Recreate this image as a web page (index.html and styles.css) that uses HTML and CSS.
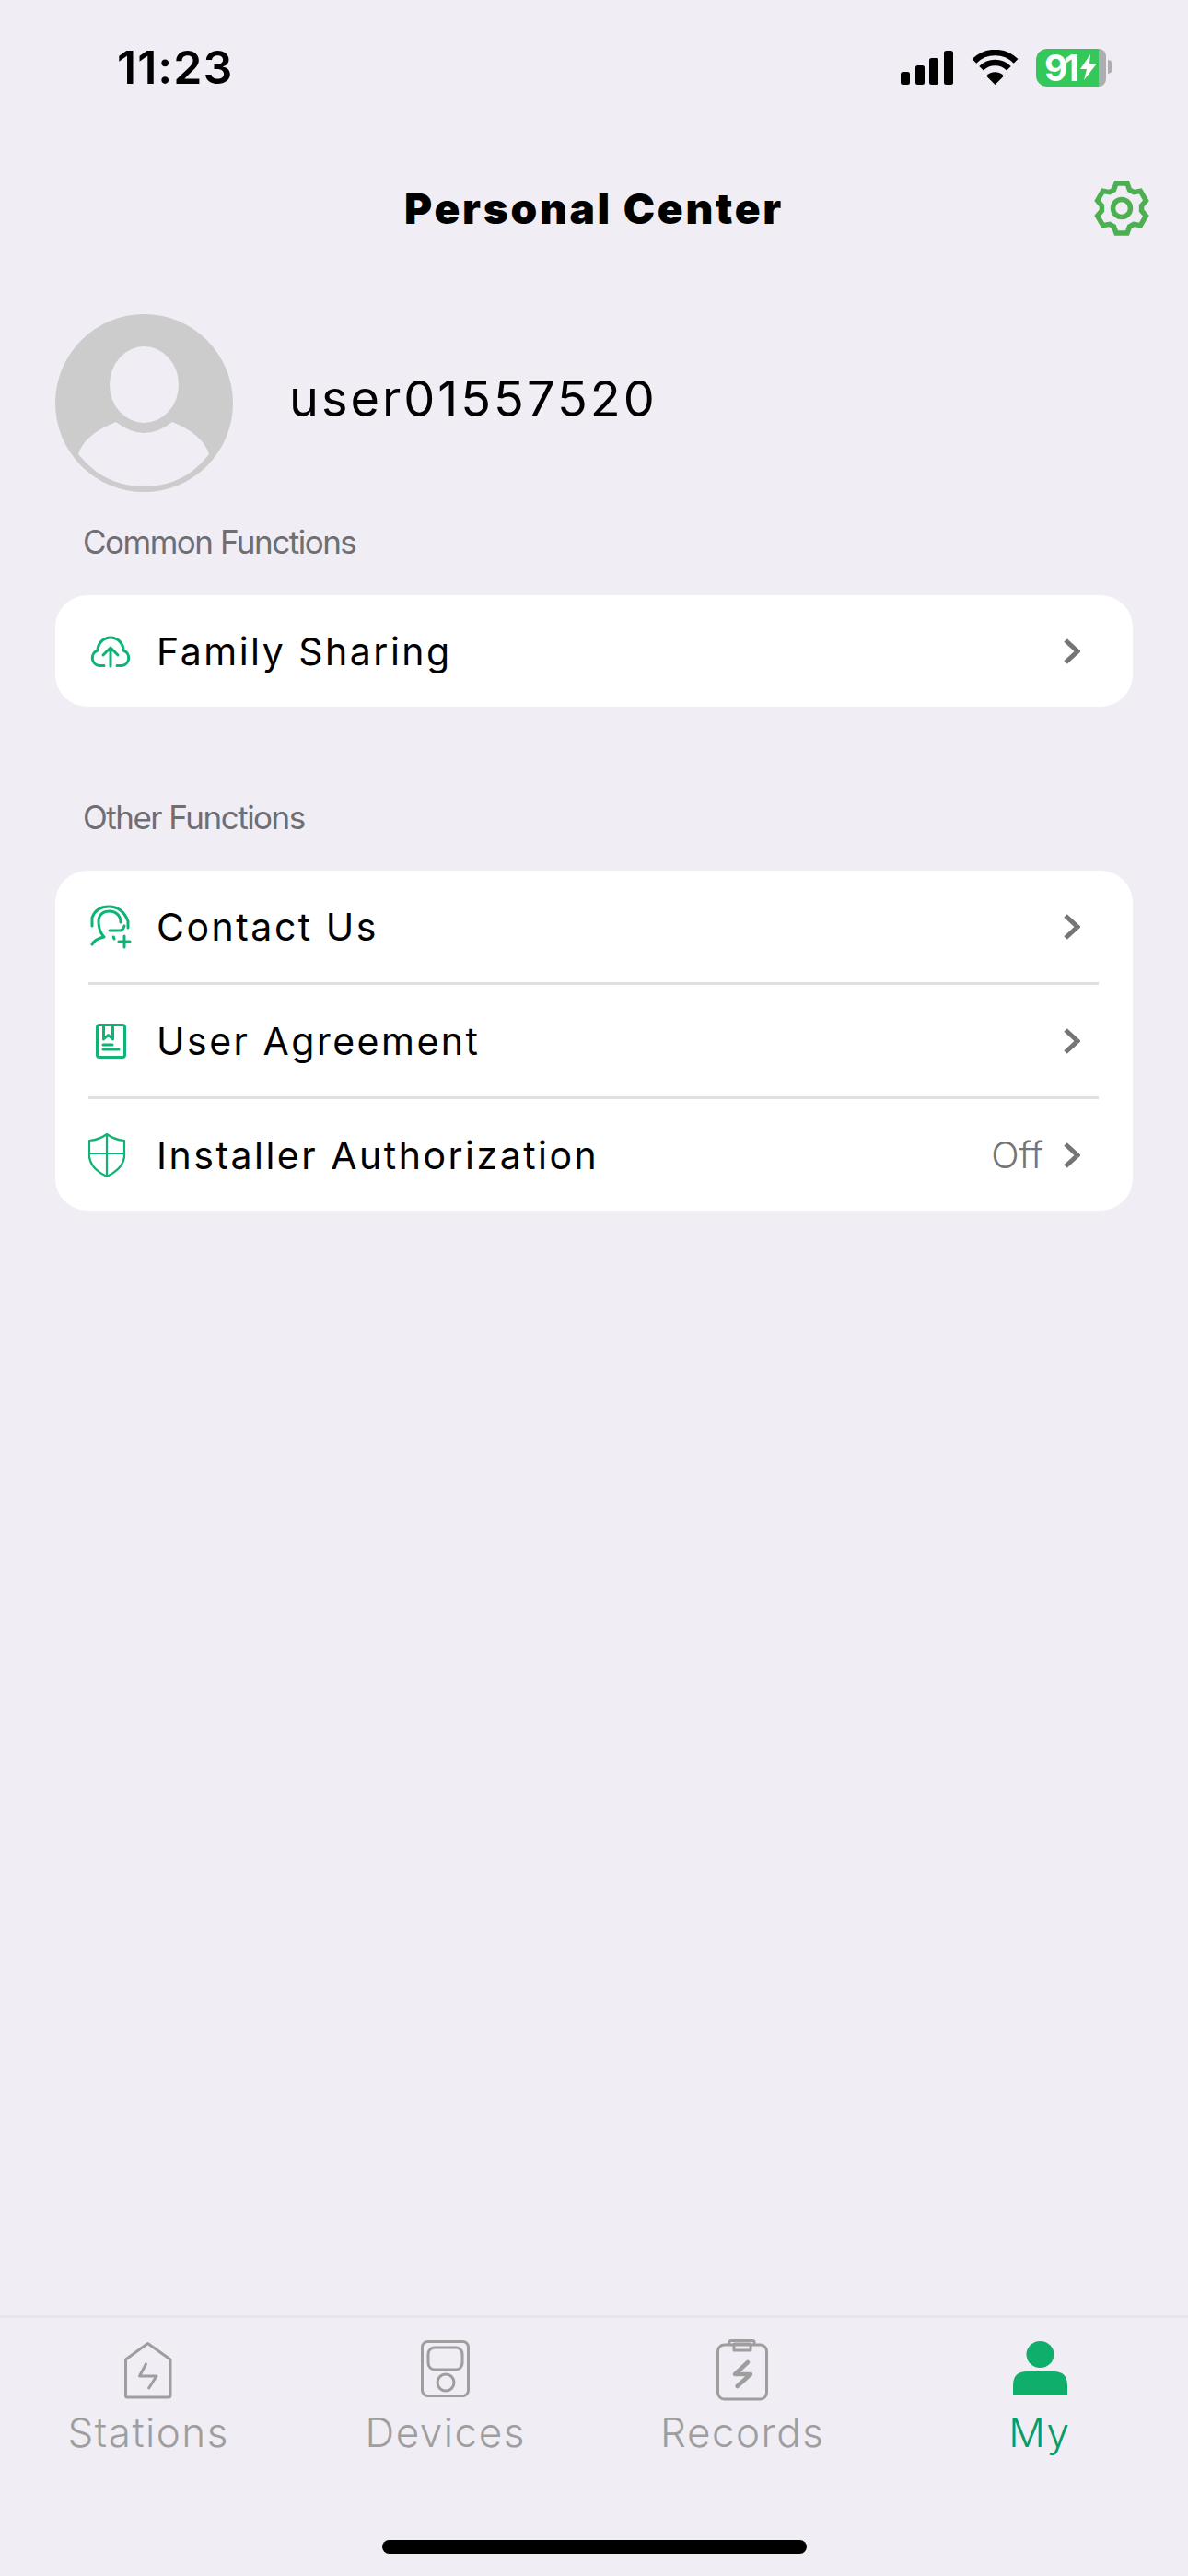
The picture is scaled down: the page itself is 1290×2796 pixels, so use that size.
FILE: index.html
```html
<!DOCTYPE html>
<html lang="en">
<head>
    <meta charset="UTF-8">
    <meta name="viewport" content="width=device-width, initial-scale=1.0">
    <title>Personal Center</title>

    <link rel="stylesheet" href="styles.css">
</head>
<body>
    <div class="screen">
        <div class="status">
            <span class="status__time">11:23</span>
            <div class="status__icons">
                <svg class="icon-signal" width="57" height="37" viewBox="0 0 57 37">
                    <rect x="0" y="23" width="10" height="14" rx="2.5"/>
                    <rect x="16" y="16" width="10" height="21" rx="2.5"/>
                    <rect x="31" y="8" width="10" height="29" rx="2.5"/>
                    <rect x="47" y="0" width="10" height="37" rx="2.5"/>
                </svg>
                <svg class="icon-wifi" width="51" height="38" viewBox="0 0 51 38">
                    <path class="wifi-arc" d="M2.9 12.4A32 32 0 0 1 48.1 12.4"/>
                    <path class="wifi-arc" d="M10.6 20.2A21 21 0 0 1 40.4 20.2"/>
                    <path d="M25.5 38L16 28.5A13 13 0 0 1 35 28.5Z"/>
                </svg>
                <div class="battery">
                    <div class="battery__fill">
                        <span class="battery__level">91</span>
                        <svg width="18" height="28" viewBox="0 0 18 28">
                            <path d="M11 0L0 16H7L4 28L18 10H10Z" fill="#fff"/>
                        </svg>
                    </div>
                    <div class="battery__rest"></div>
                </div>
            </div>
        </div>

        <header class="nav">
            <h1 class="nav__title">Personal Center</h1>
            <svg class="nav__gear" width="60" height="60" viewBox="0 0 60 60">
                <path d="M21.5 10L24 3H36L38.5 10L43.07 12.64L50.38 11.3L56.38 21.7L51.57 27.36V32.64L56.38 38.3L50.38 48.7L43.07 47.36L38.5 50L36 57H24L21.5 50L16.93 47.36L9.62 48.7L3.62 38.3L8.43 32.64V27.36L3.62 21.7L9.62 11.3L16.93 12.64Z"/>
                <circle cx="30" cy="30" r="9.5"/>
            </svg>
        </header>

        <main class="content">
            <div class="profile">
                <svg class="profile__avatar" width="193" height="193" viewBox="0 0 193 193">
                    <circle cx="96.5" cy="96.5" r="96.5" fill="#cccccc"/>
                    <ellipse cx="96.5" cy="76.5" rx="37.5" ry="41.5" fill="#f0edf4"/>
                    <path d="M66 117Q96.5 141 127 117Q160 130 167 152Q140 187 96.5 187Q53 187 25 152Q32 130 66 117Z" fill="#f0edf4"/>
                </svg>
                <span class="profile__name">user01557520</span>
            </div>

            <h2 class="section-label">Common Functions</h2>
            <ul class="card">
                <li class="row">
                    <svg class="row__icon" width="48" height="48" viewBox="0 0 48 48">
                        <path transform="translate(2 7)" d="M15 32.5H10A8.5 8.5 0 0 1 8 16A14 14 0 0 1 36 16A8.5 8.5 0 0 1 34 32.5H29M22 33V14M14 21L22 13L30 21"/>
                    </svg>
                    <span class="row__label">Family Sharing</span>
                    <svg class="row__chevron" width="18" height="28" viewBox="0 0 18 28"><path d="M2 2L15 14L2 26"/></svg>
                </li>
            </ul>

            <h2 class="section-label section-label--other">Other Functions</h2>
            <ul class="card">
                <li class="row">
                    <svg class="row__icon" width="48" height="48" viewBox="0 0 48 48">
                        <path transform="translate(2 1)" d="M2 22V13C5 5 12 1 20 1C30 1 37 6 41 17V24M15 34C11 30 9 24 9 17C9 10 14 6 21 6C28 6 33 11 33 18M21 27H33Q36 26 37 22M15 34Q5 36 2 42M25.300 34L26 36M37 33V45M31 39H43"/>
                    </svg>
                    <span class="row__label">Contact Us</span>
                    <svg class="row__chevron" width="18" height="28" viewBox="0 0 18 28"><path d="M2 2L15 14L2 26"/></svg>
                </li>
                <li class="row">
                    <svg class="row__icon" width="48" height="48" viewBox="0 0 48 48">
                        <path transform="translate(8 5)" d="M4 1.5H29Q31.5 1.5 31.5 4V34Q31.5 36.5 29 36.5H4Q1.5 36.5 1.5 34V4Q1.5 1.5 4 1.5ZM8.5 2V17L13.5 12.5L18.5 17V2M8 23H18M8 28H25"/>
                    </svg>
                    <span class="row__label">User Agreement</span>
                    <svg class="row__chevron" width="18" height="28" viewBox="0 0 18 28"><path d="M2 2L15 14L2 26"/></svg>
                </li>
                <li class="row">
                    <svg class="row__icon row__icon--thin" width="48" height="48" viewBox="0 0 48 48">
                        <path d="M20 1Q28 7 39 8V26Q37 39 20 47Q3 39 1 26V8Q12 7 20 1ZM20 1V47M1 22H39"/>
                    </svg>
                    <span class="row__label">Installer Authorization</span>
                    <span class="row__value">Off</span>
                    <svg class="row__chevron" width="18" height="28" viewBox="0 0 18 28"><path d="M2 2L15 14L2 26"/></svg>
                </li>
            </ul>
        </main>

        <nav class="tabs">
            <a class="tab">
                <svg class="tab__icon" width="60" height="68" viewBox="0 0 60 68">
                    <path transform="translate(4 4)" d="M3 60H48Q50 60 50 58V19L25.5 1.5L1.5 19V58Q1.5 60 3 60ZM24 23L16.5 37H35L26 51"/>
                </svg>
                <span>Stations</span>
            </a>
            <a class="tab">
                <svg class="tab__icon" width="60" height="68" viewBox="0 0 60 68">
                    <g transform="translate(3 2)">
                        <rect x="1.5" y="1.5" width="50" height="59" rx="6"/>
                        <rect x="8" y="8" width="37" height="24" rx="7"/>
                        <circle cx="27" cy="46" r="9"/>
                    </g>
                </svg>
                <span>Devices</span>
            </a>
            <a class="tab">
                <svg class="tab__icon" width="60" height="68" viewBox="0 0 60 68">
                    <g transform="translate(2 1)">
                        <rect x="1.5" y="6" width="53" height="59" rx="7"/>
                        <path d="M14 6V3Q14 1.5 16 1.5H39Q41 1.5 41 3V6"/>
                        <rect x="19" y="5" width="18" height="7"/>
                        <path class="tab__bolt" d="M34 25L20 38H37L22.500 51"/>
                    </g>
                </svg>
                <span>Records</span>
            </a>
            <a class="tab tab--active">
                <svg class="tab__icon" width="60" height="68" viewBox="0 0 60 68">
                    <g transform="translate(1 3)">
                        <ellipse cx="29.500" cy="14.500" rx="15" ry="14.500"/>
                        <path d="M0 59V48Q0 33 15 33H44Q59 33 59 48V59Z"/>
                    </g>
                </svg>
                <span>My</span>
            </a>
        </nav>

        <div class="home-bar"></div>
    </div>
</body>
</html>
```

FILE: styles.css
```css
* {
    margin: 0;
    padding: 0;
    box-sizing: border-box;
}

body {
    background-color: #f0edf4;
    color: #000;
    font-family: 'Inter', 'Roboto', sans-serif;
}

.screen {
    display: flex;
    flex-direction: column;
    height: 2796px;
    overflow: hidden;
}

.status {
    display: flex;
    align-items: center;
    justify-content: space-between;
    height: 146px;
    padding: 0 89px 0 127px;
}

.status__time {
    font-size: 50px;
    font-weight: 600;
    letter-spacing: 1px;
}

.status__icons {
    display: flex;
    align-items: center;
}

.icon-wifi {
    margin-left: 20px;
}

.wifi-arc {
    fill: none;
    stroke: #000;
    stroke-width: 6.5;
}

.battery {
    position: relative;
    display: flex;
    width: 76px;
    height: 41px;
    margin-left: 19px;
    border-radius: 12px;
}

.battery::after {
    content: '';
    position: absolute;
    top: 12px;
    right: -7px;
    width: 5px;
    height: 15px;
    background-color: #aeaeb2;
    border-radius: 0 5px 5px 0;
}

.battery__fill {
    display: flex;
    align-items: center;
    flex: 1;
    padding-left: 9px;
    background-color: #34c759;
    border-radius: 12px 0 0 12px;
}

.battery__level {
    color: #fff;
    font-size: 39px;
    font-weight: 700;
    letter-spacing: -4px;
    margin-right: 5px;
}

.battery__rest {
    width: 8px;
    background-color: #aeaeb2;
    border-radius: 0 8px 8px 0;
}

.nav {
    display: grid;
    grid-template-columns: 1fr auto 1fr;
    align-items: center;
    height: 160px;
    padding-right: 42px;
    padding-left: 42px;
}

.nav__title {
    grid-column: 2;
    font-size: 46px;
    font-weight: 900;
    letter-spacing: 2.7px;
    white-space: nowrap;
}

.nav__gear {
    grid-column: 3;
    justify-self: end;
    fill: none;
    stroke: #4caf50;
    stroke-width: 5.5;
    stroke-linejoin: miter;
}

.content {
    flex: 1;
    padding: 35px 60px 0;
}

.profile {
    display: flex;
    align-items: center;
    height: 193px;
}

.profile__name {
    margin-left: 61px;
    margin-bottom: 10px;
    font-size: 54px;
    letter-spacing: 3px;
}

.section-label {
    height: 52px;
    margin: 28px 0 32px 30px;
    color: #6e6e73;
    font-size: 35px;
    font-weight: 400;
    letter-spacing: -1.5px;
    line-height: 52px;
}

.section-label--other {
    margin-top: 94px;
    margin-bottom: 32px;
}

.card {
    list-style: none;
    background-color: #fff;
    border-radius: 35px;
    padding: 0 37px 0 36px;
}

.row {
    display: flex;
    align-items: center;
    height: 124px;
    border-bottom: 3px solid #e0e0e0;
}

.row:last-child {
    height: 121px;
    border-bottom: none;
}

.row__icon {
    flex: none;
    margin-right: 26px;
    fill: none;
    stroke: #0fb374;
    stroke-width: 3;
    stroke-linecap: round;
    stroke-linejoin: round;
}

.row__icon--thin {
    stroke-width: 2.2;
}

.row__label {
    flex: 1;
    font-size: 41px;
    letter-spacing: 2.5px;
}

.row__value {
    margin-right: 22px;
    color: #757575;
    font-size: 40px;
    font-weight: 300;
}

.row__chevron {
    flex: none;
    margin-right: 20px;
    fill: none;
    stroke: #757575;
    stroke-width: 5;
}

.tabs {
    display: grid;
    grid-template-columns: repeat(4, 1fr);
    height: 244px;
    padding-top: 22px;
    border-top: 3px solid #e7e6ec;
}

.tab {
    display: flex;
    flex-direction: column;
    align-items: center;
    color: #9e9e9e;
    font-size: 44px;
    font-weight: 350;
    letter-spacing: 1.5px;
    line-height: 68px;
}

.tab__icon {
    flex: none;
    fill: none;
    stroke: #9e9e9e;
    stroke-width: 3;
    stroke-linejoin: round;
}

.tab__bolt {
    stroke-width: 4.5;
    stroke-linecap: round;
}

.tab--active {
    color: #0a9a64;
}

.tab--active .tab__icon {
    fill: #0fae6b;
    stroke: none;
}

.home-bar {
    flex: none;
    width: 461px;
    height: 15px;
    margin: 0 auto 24px;
    background-color: #000;
    border-radius: 8px;
}
```
